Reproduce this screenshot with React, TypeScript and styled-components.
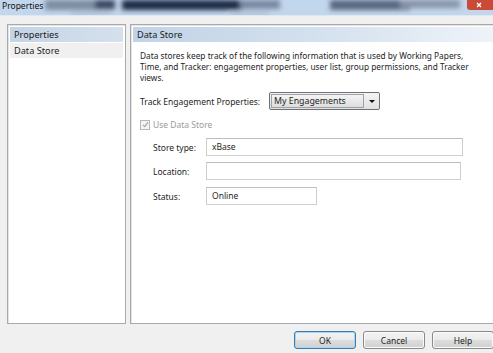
import React from "react";
import styled, { createGlobalStyle } from "styled-components";

const GlobalStyle = createGlobalStyle`
  html, body {
    margin: 0;
    padding: 0;
    width: 493px;
    height: 353px;
    overflow: hidden;
    background: #f0f0f0;
  }
  body {
    font-family: "Noto Sans", "DejaVu Sans", sans-serif;
    font-size: 8.5px;
    color: #1e1e1e;
  }
`;

const Window = styled.div`
  width: 493px;
  height: 353px;
  display: flex;
  flex-direction: column;
  background: #f0f0f0;
`;

const TitleBar = styled.div`
  position: relative;
  height: 16px;
  flex: none;
  display: flex;
  align-items: flex-start;
  padding: 1px 2px 0;
  box-sizing: border-box;
  background: #c2d6ec;
  border-bottom: 1px solid #dfe8f2;
  overflow: hidden;
`;

const Glass = styled.svg`
  position: absolute;
  left: 0;
  top: 0;
`;

const Title = styled.span`
  position: relative;
  font-size: 8.5px;
  color: #111;
  line-height: 10px;
`;

const Body = styled.div`
  flex: 1;
  display: flex;
  flex-direction: column;
  padding: 8px 0 0 7px;
`;

const Panels = styled.div`
  display: flex;
  gap: 4px;
  height: 300px;
`;

const Panel = styled.div<{ $w?: number }>`
  ${(p) => (p.$w ? `width: ${p.$w}px;` : "")}
  flex: ${(p) => (p.$w ? "none" : "1")};
  box-sizing: border-box;
  background: #fff;
  border: 1px solid #a9a9a9;
  box-shadow: inset 1px 1px 0 #e3e3e3;
  padding: 2px;
  display: flex;
  flex-direction: column;
  ${(p) => (p.$w ? "" : "border-right: none; padding-right: 0;")}
`;

const Header = styled.div<{ $fade?: boolean }>`
  height: 15px;
  line-height: 15px;
  padding-left: 4px;
  font-size: 9.2px;
  color: #1a1a1a;
  background: ${(p) =>
    p.$fade
      ? "linear-gradient(90deg, #c1d3e7 0%, #d3e0ee 50%, #eef3f8 100%)"
      : "linear-gradient(90deg, #c3d4e7 0%, #d5e0ec 100%)"};
`;

const NavItem = styled.div`
  height: 15px;
  line-height: 15px;
  padding-left: 4px;
  font-size: 9.2px;
  background: #f0f0f0;
  margin-top: 1px;
`;

const Content = styled.div`
  padding: 8px 6px 0 7px;
  display: flex;
  flex-direction: column;
`;

const Para = styled.p`
  margin: 0;
  font-size: 8.3px;
  line-height: 11px;
  white-space: nowrap;
`;

const Row = styled.div<{ $indent?: number; $top?: number }>`
  display: flex;
  align-items: center;
  margin-left: ${(p) => p.$indent || 0}px;
  margin-top: ${(p) => p.$top || 0}px;
`;

const Label = styled.span<{ $w: number }>`
  width: ${(p) => p.$w}px;
  flex: none;
`;

const Select = styled.div`
  width: 111px;
  height: 18px;
  box-sizing: border-box;
  border: 1px solid #707070;
  border-radius: 2px;
  background: linear-gradient(#f4f4f4, #e1e1e1);
  display: flex;
  align-items: stretch;
`;

const SelectText = styled.div`
  flex: 1;
  margin: 1px;
  border: 1px solid #9aa3ad;
  background: linear-gradient(#f4f4f4, #dedede);
  padding-left: 2px;
  line-height: 12px;
  font-size: 8.8px;
`;

const Arrow = styled.div`
  width: 14px;
  display: flex;
  align-items: center;
  justify-content: center;
  &::after {
    content: "";
    border-left: 3px solid transparent;
    border-right: 3px solid transparent;
    border-top: 3px solid #111;
  }
`;

const Check = styled.span`
  width: 8px;
  height: 8px;
  border: 1px solid #b8b8b8;
  background: #f4f4f4;
  margin-right: 3px;
  display: flex;
  align-items: center;
  justify-content: center;
`;

const Disabled = styled.span`
  color: #9a9a9a;
`;

const Field = styled.div<{ $w: number }>`
  width: ${(p) => p.$w}px;
  height: 18px;
  box-sizing: border-box;
  border: 1px solid #cfcfcf;
  border-top-color: #bdbdbd;
  background: #fff;
  padding-left: 5px;
  line-height: 16px;
`;

const Footer = styled.div`
  display: flex;
  justify-content: flex-end;
  gap: 7px;
  padding-top: 7px;
  margin-right: -1px;
`;

const Button = styled.button<{ $default?: boolean }>`
  width: 62px;
  height: 18px;
  padding: 0;
  box-sizing: border-box;
  font-family: inherit;
  font-size: 8.5px;
  color: #1e1e1e;
  border-radius: 3px;
  border: 1px solid ${(p) => (p.$default ? "#3d7bad" : "#8a8a8a")};
  background: linear-gradient(#f3f3f3 0%, #ebebeb 50%, #dddddd 51%, #d0d0d0 100%);
  box-shadow: inset 0 0 0 1px ${(p) => (p.$default ? "#a9d7f2" : "#fbfbfb")};
`;

export default function App() {
  return (
    <Window>
      <GlobalStyle />
      <TitleBar>
        <Glass width="493" height="16">
          <defs>
            <filter id="b" x="-20%" y="-50%" width="140%" height="200%">
              <feGaussianBlur stdDeviation="2.5" />
            </filter>
          </defs>
          <g filter="url(#b)">
            <rect x="45" y="0" width="70" height="10" fill="#7d8ba0" />
            <rect x="95" y="0" width="20" height="9" fill="#3b4660" />
            <rect x="122" y="0" width="120" height="10" fill="#1d2a47" />
            <rect x="240" y="0" width="40" height="9" fill="#7888a2" />
            <rect x="330" y="0" width="80" height="10" fill="#58677f" />
            <rect x="400" y="0" width="60" height="8" fill="#8693a8" />
            <rect x="70" y="12" width="40" height="3" fill="#a8bbd2" />
            <rect x="230" y="12" width="40" height="3" fill="#a8bbd2" />
          </g>
          <rect x="467" y="-3" width="30" height="13" rx="3" fill="#c94a37" />
          <path d="M477 3 l4 4 M481 3 l-4 4" stroke="#fff" strokeWidth="1.4" />
        </Glass>
        <Title>Properties</Title>
      </TitleBar>
      <Body>
        <Panels>
          <Panel $w={119}>
            <Header>Properties</Header>
            <NavItem>Data Store</NavItem>
          </Panel>
          <Panel>
            <Header $fade>Data Store</Header>
            <Content>
              <Para>
                Data stores keep track of the following information that is used by Working Papers,
                <br />
                Time, and Tracker: engagement properties, user list, group permissions, and Tracker
                <br />
                views.
              </Para>
              <Row $top={9}>
                <Label $w={129}>Track Engagement Properties:</Label>
                <Select>
                  <SelectText>My Engagements</SelectText>
                  <Arrow />
                </Select>
              </Row>
              <Row $top={9}>
                <Check>
                  <svg width="7" height="7" viewBox="0 0 7 7">
                    <path d="M1 3.8 L2.8 5.6 L6 1.2" stroke="#a6a6a6" strokeWidth="1.2" fill="none" />
                  </svg>
                </Check>
                <Disabled>Use Data Store</Disabled>
              </Row>
              <Row $indent={13} $top={8}>
                <Label $w={53}>Store type:</Label>
                <Field $w={257}>xBase</Field>
              </Row>
              <Row $indent={13} $top={6}>
                <Label $w={53}>Location:</Label>
                <Field $w={255} />
              </Row>
              <Row $indent={13} $top={7}>
                <Label $w={53}>Status:</Label>
                <Field $w={111}>Online</Field>
              </Row>
            </Content>
          </Panel>
        </Panels>
        <Footer>
          <Button $default>OK</Button>
          <Button>Cancel</Button>
          <Button>Help</Button>
        </Footer>
      </Body>
    </Window>
  );
}
